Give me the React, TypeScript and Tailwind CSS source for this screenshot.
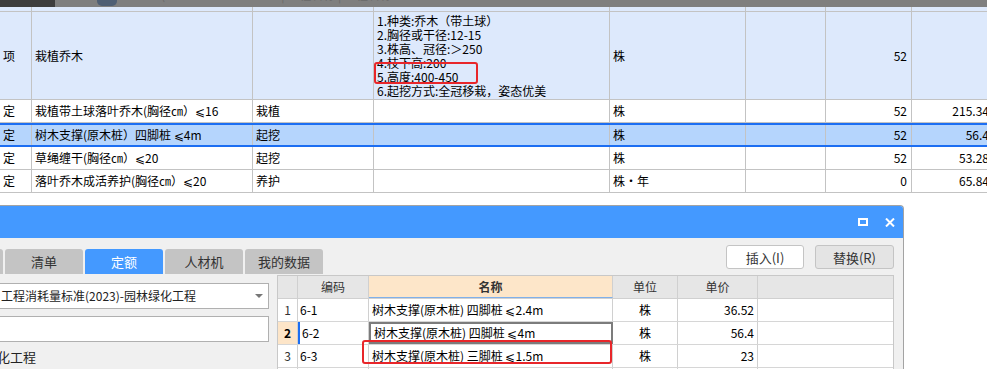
import clsx from "clsx";

const topCols = [
  "w-[32px]",
  "w-[221px]",
  "w-[121px]",
  "w-[236px]",
  "w-[136px]",
  "w-[80px]",
  "w-[86px]",
  "w-[82px]",
];

// right-aligned numeric columns in the upper table
const rightCols = [6, 7];

const specLines = [
  "1.种类:乔木（带土球）",
  "2.胸径或干径:12-15",
  "3.株高、冠径:＞250",
  "4.枝下高:200",
  "5.高度:400-450",
  "6.起挖方式:全冠移栽，姿态优美",
];

const subRows = [
  ["定", "栽植带土球落叶乔木(胸径㎝）⩽16", "栽植", "", "株", "", "52", "215.34"],
  ["定", "树木支撑(原木桩）四脚桩 ⩽4m", "起挖", "", "株", "", "52", "56.4"],
  ["定", "草绳缠干(胸径㎝）⩽20", "起挖", "", "株", "", "52", "53.28"],
  ["定", "落叶乔木成活养护(胸径㎝）⩽20", "养护", "", "株・年", "", "0", "65.84"],
];

const gridCols = ["w-[20px]", "w-[71px]", "w-[244px]", "w-[65px]", "w-[80px]"];

const quotaRows = [
  { no: "1", code: "6-1", name: "树木支撑(原木桩) 四脚桩 ⩽2.4m", unit: "株", price: "36.52" },
  { no: "2", code: "6-2", name: "树木支撑(原木桩) 四脚桩 ⩽4m", unit: "株", price: "56.4" },
  { no: "3", code: "6-3", name: "树木支撑(原木桩) 三脚桩 ⩽1.5m", unit: "株", price: "23" },
  { no: "", code: "", name: "", unit: "", price: "" },
];

const tabs = ["工程量", "清单", "定额", "人材机", "我的数据"];

function TopCell({ i, children }: { i: number; children?: React.ReactNode }) {
  return (
    <div
      className={clsx(
        topCols[i],
        "relative h-full shrink-0 border-r border-[#c3c3c3] flex items-center px-[3px] whitespace-nowrap overflow-hidden",
        rightCols.includes(i) && "justify-end pr-[4px]"
      )}
    >
      {children}
    </div>
  );
}

export default function App() {
  return (
    <div
      className="w-[987px] h-[369px] overflow-hidden bg-white text-[12px] text-black leading-none"
      style={{ fontFamily: '"Noto Sans CJK SC", "Noto Sans", sans-serif' }}
    >
      {/* dimmed status strip */}
      <div className="h-[7px] bg-[#7f7f7f] flex overflow-hidden">
        <div className="w-[55px] shrink-0 bg-[#3d3d3d]" />
        <div className="ml-[42px] mt-[-4px] w-[20px] h-[10px] rounded-full bg-[#4f5f74]" />
        <div className="ml-[12px] -mt-[11px] text-[12px] text-[#6a6a6a] whitespace-nowrap">
          Blank(    2024-05-23 10:03:07   |   工程名称   |   工程名称
        </div>
      </div>

      {/* upper bill table */}
      <div className="w-[994px]">
        <div className="flex h-[5px] bg-[#dde9fc] border-b border-[#c3c3c3]">
          {topCols.map((_, i) => (
            <TopCell key={i} i={i} />
          ))}
        </div>
        <div className="flex h-[88px] bg-[#dde9fc] border-b border-[#c3c3c3]">
          <TopCell i={0}>项</TopCell>
          <TopCell i={1}>栽植乔木</TopCell>
          <TopCell i={2} />
          <TopCell i={3}>
            <div className="flex flex-col">
              {specLines.map((l) => (
                <span key={l} className="h-[14px] leading-[14px]">
                  {l}
                </span>
              ))}
            </div>
            <div className="absolute left-0 top-[50px] w-[104px] h-[22px] border-2 border-[#e8262a] rounded-[3px]" />
          </TopCell>
          <TopCell i={4}>株</TopCell>
          <TopCell i={5} />
          <TopCell i={6}>52</TopCell>
          <TopCell i={7} />
        </div>
        {subRows.map((r, ri) => (
          <div
            key={ri}
            className={clsx(
              "flex",
              ri === 1
                ? "h-[24px] bg-[#b5d5fd] border-y-2 border-[#1c6ef2]"
                : "h-[23px] bg-white border-b border-[#c3c3c3]"
            )}
          >
            {r.map((c, i) => (
              <TopCell key={i} i={i}>
                {c}
              </TopCell>
            ))}
          </div>
        ))}
      </div>

      <div className="h-[12px]" />

      {/* quota picker dialog */}
      <div className="w-[904px] h-[180px] overflow-hidden border-t border-r border-[#a3a3a3] rounded-tr-[4px] bg-[#f0f0f0]">
        <div className="h-[32px] bg-[#4499ff] flex items-center justify-end gap-[17px] pr-[8px]">
          <svg width="10" height="8" viewBox="0 0 10 8">
            <rect x="1" y="1" width="8" height="6" fill="none" stroke="white" strokeWidth="2" />
          </svg>
          <svg width="10" height="9" viewBox="0 0 10 9">
            <path d="M1 0.5 L9 8.5 M9 0.5 L1 8.5" stroke="white" strokeWidth="2" />
          </svg>
        </div>

        <div className="h-[37px] flex items-start justify-between pr-[9px]">
          <div className="flex gap-[2px] mt-[11px]">
            {tabs.map((t, i) => (
              <div
                key={t}
                className={clsx(
                  "w-[78px] h-[25px] rounded-t-[3px] flex items-center justify-center text-[13px]",
                  i === 0 && "-ml-[75px]",
                  i === 2 ? "bg-[#4499ff] text-white" : "bg-[#c4c4c4] text-[#333]"
                )}
              >
                {t}
              </div>
            ))}
          </div>
          <div className="flex gap-[11px] mt-[7px] text-[13px] text-[#333]">
            <button className="w-[78px] h-[24px] bg-white border border-[#c4c4c4] rounded-[3px]">插入(I)</button>
            <button className="w-[79px] h-[24px] bg-[#e4e4e4] border border-[#c4c4c4] rounded-[3px]">替换(R)</button>
          </div>
        </div>

        <div className="flex gap-[8px]">
          <div className="w-[269px] shrink-0 pt-[8px] text-[12px] text-[#222]">
            <div className="h-[26px] bg-white border border-l-0 border-[#b0b0b0] flex items-center justify-between pl-[1px] pr-[5px] whitespace-nowrap">
              <span>工程消耗量标准(2023)-园林绿化工程</span>
              <svg width="8" height="4" viewBox="0 0 8 4">
                <path d="M0 0 H8 L4 4 Z" fill="#777" />
              </svg>
            </div>
            <div className="mt-[7px] h-[26px] bg-white border border-l-0 border-[#b0b0b0]" />
            <div className="mt-[8px] -ml-[3px] text-[13px] whitespace-nowrap">化工程</div>
          </div>

          <div className="relative w-[617px] h-[120px] bg-white border border-[#c8c8c8]">
            <div className="flex h-[23px] bg-[#e6e6e6] border-b border-[#d0d0d0] text-[#333]">
              {["", "编码", "名称", "单位", "单价"].map((h, i) => (
                <div
                  key={i}
                  className={clsx(
                    gridCols[i],
                    "shrink-0 h-full border-r border-[#d0d0d0] flex items-center justify-center",
                    i === 2 && "bg-[#fde6c9] font-bold border-b border-b-[#7fb0ea]"
                  )}
                >
                  {h}
                </div>
              ))}
            </div>
            {quotaRows.map((r, ri) => {
              const sel = r.no === "2";
              return (
                <div key={ri} className="flex h-[23px] border-b border-[#d6d6d6]">
                  <div
                    className={clsx(
                      gridCols[0],
                      "shrink-0 h-full border-r border-[#d0d0d0] flex items-center justify-center",
                      sel ? "bg-[#fde5c8] font-bold" : "text-[#333]"
                    )}
                  >
                    {r.no}
                  </div>
                  <div
                    className={clsx(
                      gridCols[1],
                      "shrink-0 h-full border-r border-[#d0d0d0] flex items-center pl-[2px]",
                      sel && "border-l-2 border-l-[#1c6ef2] pl-0"
                    )}
                  >
                    {r.code}
                  </div>
                  <div
                    className={clsx(
                      gridCols[2],
                      "shrink-0 h-full flex items-center pl-[3px] whitespace-nowrap",
                      sel ? "border-2 border-[#7c7c7c] pl-[2px]" : "border-r border-[#d0d0d0]"
                    )}
                  >
                    {r.name}
                  </div>
                  <div className={clsx(gridCols[3], "shrink-0 h-full border-r border-[#d0d0d0] flex items-center justify-center")}>
                    {r.unit}
                  </div>
                  <div className={clsx(gridCols[4], "shrink-0 h-full border-r border-[#d0d0d0] flex items-center justify-end pr-[3px]")}>
                    {r.price}
                  </div>
                </div>
              );
            })}
            <div className="absolute left-[84px] top-[64px] w-[250px] h-[24px] border-2 border-[#e8262a] rounded-[3px]" />
          </div>
        </div>
      </div>
    </div>
  );
}
